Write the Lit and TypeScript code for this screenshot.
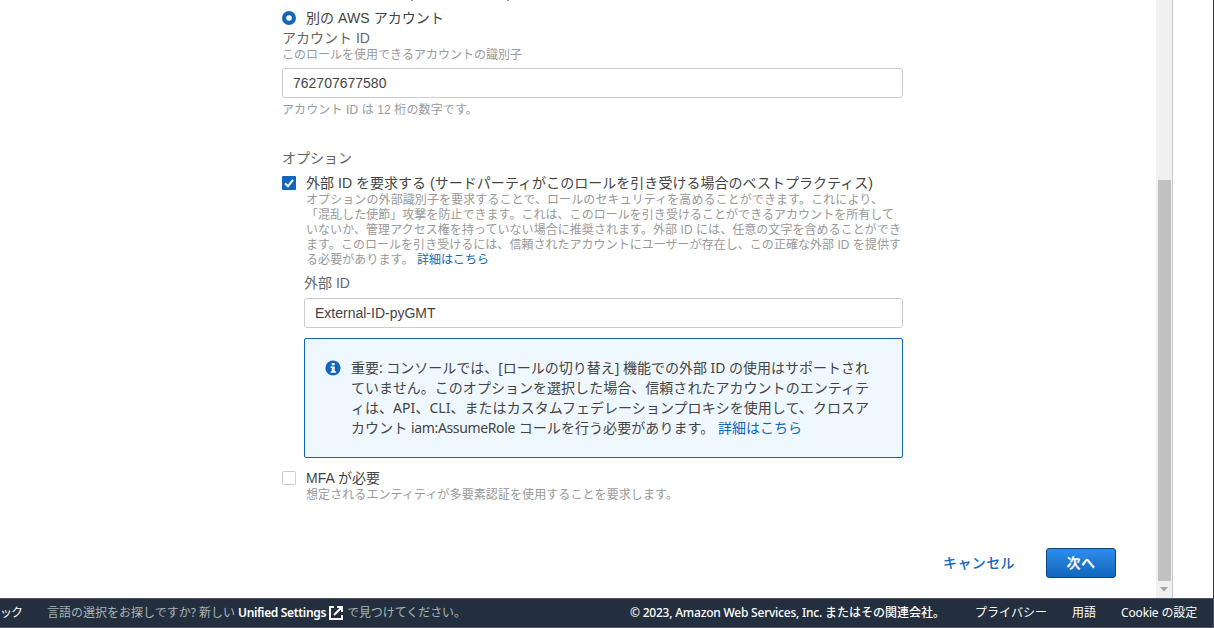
import { LitElement, html, css } from "lit";
import { customElement, property } from "lit/decorators.js";

const JP = css`"Liberation Sans", "Noto Sans CJK JP", sans-serif`;

/** One line of text, tracked so that its advance equals the given measure. */
@customElement("text-run")
class TextRun extends LitElement {
  @property({ type: Number }) measure = 0;
  static styles = css`
    :host { display: inline-block; white-space: pre; vertical-align: top; }
  `;
  firstUpdated() {
    const box = this.renderRoot.querySelector("span") as HTMLElement;
    const count = [...(this.textContent ?? "")].length;
    const natural = box.getBoundingClientRect().width;
    if (this.measure && count) box.style.letterSpacing = `${(this.measure - natural) / count}px`;
  }
  render() {
    return html`<span><slot></slot></span>`;
  }
}

const run = (text: string, measure: number) => html`<text-run .measure=${measure}>${text}</text-run>`;

@customElement("app-root")
class AppRoot extends LitElement {
  static styles = css`
    :host {
      display: flex; flex-direction: column; box-sizing: border-box;
      width: 1214px; height: 628px; overflow: hidden; background: #fff;
      font: 14px/20px ${JP}; color: #444;
    }
    .body { display: flex; height: 598px; }
    .page { width: 1156px; flex: none; display: flex; flex-direction: column; }
    .form { width: 621px; margin-left: 282px; display: flex; flex-direction: column; }
    .cut { height: 8px; display: flex; gap: 94px; padding-left: 129px; }
    .cut i { width: 2px; height: 1px; background: #999; }
    .choice { display: flex; height: 20px; gap: 10px; align-items: center; }
    .choice svg { flex: none; display: block; }
    .label { height: 20px; color: #666; }
    .hint { font-size: 12px; line-height: 15px; color: #999; height: 15px; }
    .field {
      box-sizing: border-box; height: 30px; border: 1px solid #ccc; border-radius: 3px;
      padding: 0 10px; line-height: 28px; color: #444; background: #fff;
    }
    .account { margin-top: 5px; }
    .digits { margin-top: 5px; }
    .options { margin-top: 30px; }
    .external { margin-top: 5px; }
    .indent { padding-left: 24px; display: flex; flex-direction: column; }
    a { color: #1166bb; text-decoration: none; }
    .nested { margin-left: 22px; display: flex; flex-direction: column; }
    .ext-label { margin-top: 5px; margin-bottom: 5px; }
    .alert {
      box-sizing: border-box; height: 120px; margin-top: 10px; padding: 19px 20px;
      border: 1px solid #1166bb; border-radius: 2px; background: #f0f8ff;
      display: flex; gap: 10px;
      font-family: "Noto Sans", "Noto Sans CJK JP", sans-serif;
    }
    .alert svg { flex: none; margin-top: 2px; }
    .lines { display: flex; flex-direction: column; }
    .lines div { height: 20px; white-space: nowrap; }
    .mfa { margin-top: 10px; }
    .actions {
      display: flex; justify-content: flex-end; align-items: center; gap: 31px;
      margin: 45px 40px 0 0; font-weight: 500;
    }
    .next {
      box-sizing: border-box; width: 70px; height: 30px; border: 1px solid #0c457c; border-radius: 3px;
      background: linear-gradient(#2e8ded, #1166bb); color: #fff; font-weight: 700;
      display: flex; align-items: center; justify-content: center;
    }
    .scroll {
      width: 16px; flex: none; background: #f0f0f0; display: flex; flex-direction: column;
      align-items: center; justify-content: flex-end; gap: 6px; padding-bottom: 6px; box-sizing: border-box;
    }
    .thumb { width: 13px; height: 401px; background: #c1c1c1; margin-left: 1px; }
    .scroll svg { display: block; }
    .side { width: 42px; flex: none; box-sizing: border-box; border-left: 1px solid #c8ccd0; border-right: 1px solid #35323a; }
    .footer {
      box-sizing: border-box; height: 29px; border-top: 1px solid #4e5561; border-right: 1px solid #4e5561; background: #232f3e;
      color: #fff; font: 12px/28px "Noto Sans", "Noto Sans CJK JP", sans-serif;
      display: flex; justify-content: space-between; padding-right: 16px; white-space: nowrap;
    }
    .left, .right { display: flex; }
    .left svg { display: block; margin: 7px 4px 0 3px; }
    .lang { display: flex; margin-left: 25px; color: #aab7b8; }
    .lang b { color: #fff; margin-left: 3px; font-weight: 600; }
    .copy { font-weight: 500; margin-right: 30px; }
    .privacy { margin-right: 25px; }
    .terms { margin-right: 25px; }
    .edge { height: 1px; background: #5a5458; }
  `;

  render() {
    return html`
      <div class="body">
        <div class="page">
          <div class="form">
            <div class="cut"><i></i><i></i></div>
            <div class="choice">
              <svg width="14" height="14"><circle cx="7" cy="7" r="7" fill="#1166bb"/><circle cx="7" cy="7" r="2.8" fill="#fff"/></svg>
              ${run("別の AWS アカウント", 138)}
            </div>
            <div class="label">${run("アカウント ID", 88)}</div>
            <div class="hint">${run("このロールを使用できるアカウントの識別子", 240)}</div>
            <div class="field account">762707677580</div>
            <div class="hint digits">${run("アカウント ID は 12 桁の数字です。", 196)}</div>
            <div class="label options">${run("オプション", 70)}</div>
            <div class="choice external">
              <svg width="14" height="14"><rect width="14" height="14" rx="1" fill="#1166bb"/><path d="M3 7.2 6 10.2 11 3.8" fill="none" stroke="#fff" stroke-width="2"/></svg>
              ${run("外部 ID を要求する (サードパーティがこのロールを引き受ける場合のベストプラクティス)", 567)}
            </div>
            <div class="indent">
              <div class="hint">${run("オプションの外部識別子を要求することで、ロールのセキュリティを高めることができます。これにより、", 577)}</div>
              <div class="hint">${run("「混乱した使節」攻撃を防止できます。これは、このロールを引き受けることができるアカウントを所有して", 588)}</div>
              <div class="hint">${run("いないか、管理アクセス権を持っていない場合に推奨されます。外部 ID には、任意の文字を含めることができ", 595)}</div>
              <div class="hint">${run("ます。このロールを引き受けるには、信頼されたアカウントにユーザーが存在し、この正確な外部 ID を提供す", 595)}</div>
              <div class="hint">${run("る必要があります。 ", 111)}<a>${run("詳細はこちら", 72)}</a></div>
            </div>
            <div class="nested">
              <div class="label ext-label">${run("外部 ID", 46)}</div>
              <div class="field">External-ID-pyGMT</div>
              <div class="alert">
                <svg width="16" height="16"><circle cx="8" cy="8" r="7.6" fill="#1166bb"/><path d="M6.7 2.9h3v2.4h-3zM5.6 6.5h4.1v4.7h1.2v1.5H5.6v-1.5h1.2V8H5.6z" fill="#fff"/></svg>
                <div class="lines">
                  <div>${run("重要: コンソールでは、[ロールの切り替え] 機能での外部 ID の使用はサポートされ", 518)}</div>
                  <div>${run("ていません。このオプションを選択した場合、信頼されたアカウントのエンティテ", 518)}</div>
                  <div>${run("ィは、API、CLI、またはカスタムフェデレーションプロキシを使用して、クロスア", 518)}</div>
                  <div>${run("カウント ", 60)}${run("iam:AssumeRole", 104)}${run(" コールを行う必要があります。 ", 203)}<a>${run("詳細はこちら", 84)}</a></div>
                </div>
              </div>
            </div>
            <div class="choice mfa">
              <svg width="14" height="14"><rect x=".5" y=".5" width="13" height="13" rx="1" fill="#fff" stroke="#ccc"/></svg>
              ${run("MFA が必要", 74)}
            </div>
            <div class="indent"><div class="hint">${run("想定されるエンティティが多要素認証を使用することを要求します。", 372)}</div></div>
          </div>
          <div class="actions"><a>${run("キャンセル", 72)}</a><div class="next">${run("次へ", 29)}</div></div>
        </div>
        <div class="scroll">
          <div class="thumb"></div>
          <svg width="8" height="5"><path d="M0 0h8L4 4.5z" fill="#a3a3a3"/></svg>
        </div>
        <div class="side"></div>
      </div>
      <div class="footer">
        <div class="left">
          ${run("ック", 22)}
          <div class="lang">${run("言語の選択をお探しですか? 新しい", 188)}<b>${run("Unified Settings", 88)}</b>
            <svg width="14" height="14" fill="none" stroke="#fff" stroke-width="2"><path d="M5 1H1v12h12V9M8 1h5v5M12.5 1.5 5 9"/></svg>
            ${run("で見つけてください。", 119)}
          </div>
        </div>
        <div class="right">
          <span class="copy">${run("© 2023, Amazon Web Services, Inc. ", 195)}${run("またはその関連会社。", 120)}</span>
          <span class="privacy">${run("プライバシー", 72)}</span>
          <span class="terms">${run("用語", 24)}</span>
          <span>${run("Cookie の設定", 76)}</span>
        </div>
      </div>
      <div class="edge"></div>
    `;
  }
}
